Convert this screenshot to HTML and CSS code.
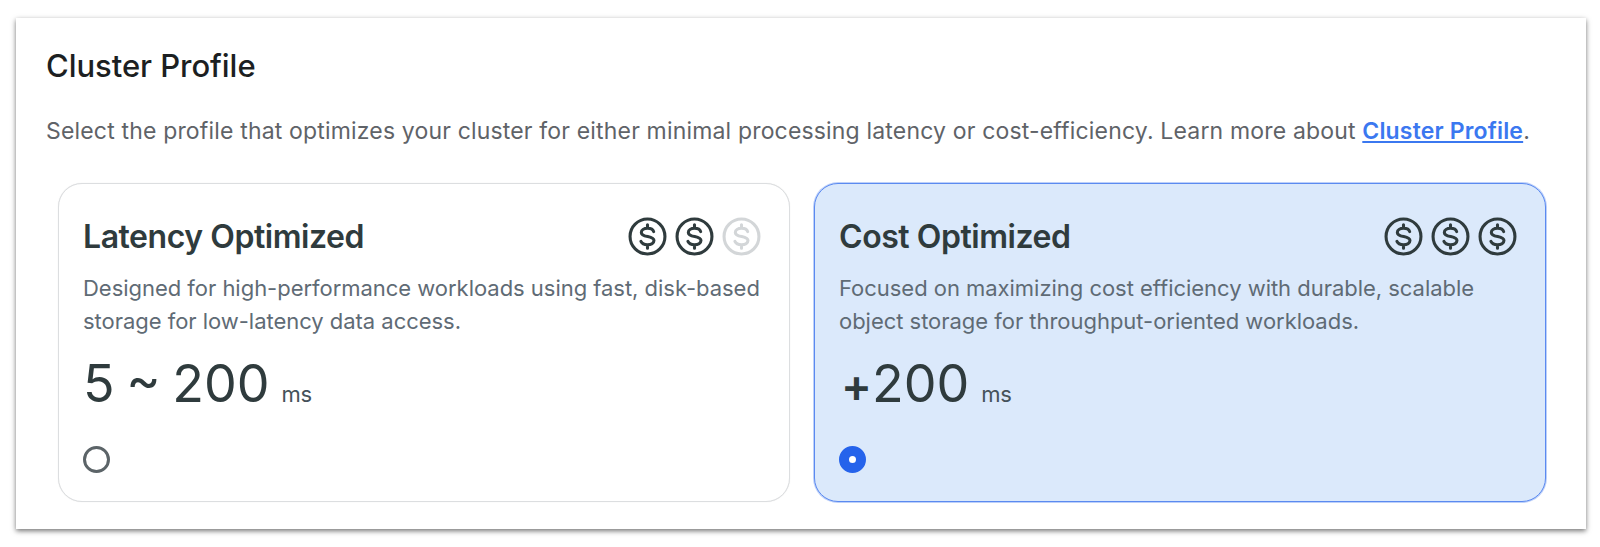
FILE: index.html
```html
<!DOCTYPE html>
<html lang="en">
<head>
    <meta charset="UTF-8">
    <title>Cluster Profile</title>
    <link rel="stylesheet" href="styles.css">
</head>
<body>
    <svg class="icon-defs" width="0" height="0">
        <symbol id="dollar" viewBox="0 0 38 38">
            <circle cx="19" cy="19" r="17" fill="none" stroke="currentColor" stroke-width="3"/>
            <path d="M19 7.500v3.500M19 27v3.500M25 14.200c-.6-2-3-3.200-6-3.200-3.500 0-6 1.600-6 4 0 5.600 12.300 2.600 12.300 8 0 2.500-2.700 4-6.300 4-3.200 0-5.500-1.200-6.400-3.200" fill="none" stroke="currentColor" stroke-width="3" stroke-linecap="round"/>
        </symbol>
    </svg>

    <div class="panel">
        <h2>Cluster Profile</h2>
        <p class="intro">Select the profile that optimizes your cluster for either minimal processing latency or cost-efficiency. Learn more about <a href="#">Cluster Profile</a>.</p>

        <div class="cards">
            <div class="card">
                <div class="card-head">
                    <h3>Latency Optimized</h3>
                    <div class="cost">
                        <svg class="coin"><use href="#dollar"/></svg>
                        <svg class="coin"><use href="#dollar"/></svg>
                        <svg class="coin off"><use href="#dollar"/></svg>
                    </div>
                </div>
                <p class="desc">Designed for high-performance workloads using fast, disk-based storage for low-latency data access.</p>
                <div class="latency"><span class="num">5 ~ 200</span><span class="unit">ms</span></div>
                <span class="radio"></span>
            </div>

            <div class="card selected">
                <div class="card-head">
                    <h3>Cost Optimized</h3>
                    <div class="cost">
                        <svg class="coin"><use href="#dollar"/></svg>
                        <svg class="coin"><use href="#dollar"/></svg>
                        <svg class="coin"><use href="#dollar"/></svg>
                    </div>
                </div>
                <p class="desc">Focused on maximizing cost efficiency with durable, scalable object storage for throughput-oriented workloads.</p>
                <div class="latency"><span class="num"><span class="plus">+</span>200</span><span class="unit">ms</span></div>
                <span class="radio on"></span>
            </div>
        </div>
    </div>
</body>
</html>
```

FILE: styles.css
```css
body {
    font-family: 'Inter', sans-serif;
    background-color: white;
    margin: 0;
    padding: 18px 14px 18px 16px;
}
.icon-defs {
    position: absolute;
}
.panel {
    height: 511px;
    box-sizing: border-box;
    padding: 28px 40px 0 30px;
    background-color: white;
    box-shadow: 0 2px 5px rgba(0, 0, 0, 0.55);
}
h2 {
    margin: 0;
    font-size: 31px;
    line-height: 40px;
    font-weight: 500;
    letter-spacing: -0.05px;
    color: #1c1f22;
}
.intro {
    margin: 29px 0 0;
    font-size: 23px;
    line-height: 32px;
    letter-spacing: 0.17px;
    color: #5f6368;
    white-space: nowrap;
}
.intro a {
    color: #3b78f0;
    font-weight: 600;
}
.cards {
    display: flex;
    gap: 24px;
    margin: 36px 0 0 12px;
}
.card {
    flex: 1;
    height: 319px;
    box-sizing: border-box;
    padding: 30px 28px 0 24px;
    background-color: white;
    border: 1px solid #dcdee0;
    border-radius: 24px;
    box-shadow: 0 0 1px rgba(0, 0, 0, 0.12);
}
.card.selected {
    background-color: #dbe9fb;
    border-color: #5b8af0;
    box-shadow: 0 0 0 1px rgba(91, 138, 240, 0.4);
}
.card-head {
    display: flex;
    justify-content: space-between;
    align-items: center;
    height: 44px;
}
h3 {
    margin: 0;
    font-size: 32px;
    font-weight: 600;
    letter-spacing: -0.45px;
    color: #2f3b3d;
}
.cost {
    display: flex;
    gap: 8px;
}
.coin {
    width: 39px;
    height: 39px;
    color: #2f3b3d;
}
.coin.off {
    color: #d3d6d8;
}
.desc {
    margin: 14px -8px 0 0;
    font-size: 22px;
    line-height: 33px;
    letter-spacing: -0.03px;
    color: #5f6b75;
}
.latency {
    margin-top: 15px;
    color: #2f3b3d;
    line-height: 62px;
}
.num {
    font-size: 52px;
    word-spacing: -3px;
}
.plus {
    margin-left: 2px;
    font-size: 46px;
    font-weight: 600;
}
.unit {
    margin-left: 12px;
    font-size: 22px;
    letter-spacing: -0.3px;
    color: #45525a;
}
.radio {
    display: block;
    width: 27px;
    height: 27px;
    margin-top: 19px;
    box-sizing: border-box;
    border: 3px solid #5c6468;
    border-radius: 50%;
}
.radio.on {
    border: 10px solid #2563eb;
    background-color: white;
}
```
